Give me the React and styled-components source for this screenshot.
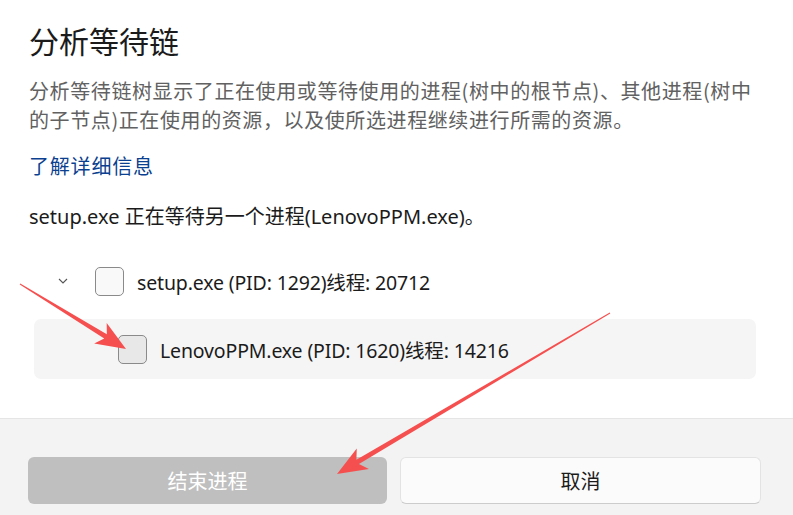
import React from "react";
import styled, { createGlobalStyle } from "styled-components";

const Global = createGlobalStyle`
  html, body { margin: 0; padding: 0; background: #fff; }
  body { width: 793px; height: 515px; overflow: hidden; font-family: "Noto Sans", "Noto Sans CJK SC", sans-serif; }
`;

const Dialog = styled.div`
  position: relative;
  width: 793px;
  height: 515px;
  display: flex;
  flex-direction: column;
  background: #fff;
`;

const Body = styled.div`
  flex: 1;
  padding: 17px 29px 0 29px;
  display: flex;
  flex-direction: column;
`;

const Title = styled.h1`
  margin: 0;
  font-family: "Noto Sans CJK SC", sans-serif;
  font-weight: 400;
  font-size: 30px;
  line-height: 46px;
  color: #1b1b1b;
`;

const Desc = styled.p`
  margin: 13px 0 0 0;
  font-family: "Noto Sans CJK SC", sans-serif;
  font-size: 20px;
  line-height: 29px;
  color: #616161;
  letter-spacing: 0.6px;
`;

const Link = styled.a`
  margin-top: 17px;
  font-family: "Noto Sans CJK SC", sans-serif;
  font-size: 20px;
  line-height: 30px;
  letter-spacing: 0.8px;
  color: #0b3f8f;
  text-decoration: none;
`;

const Status = styled.p`
  margin: 21px 0 0 0;
  font-size: 20px;
  line-height: 30px;
  color: #1b1b1b;
`;

const Tree = styled.div`
  margin-top: 27px;
  display: flex;
  flex-direction: column;
  gap: 16px;
`;

const Row = styled.div`
  display: flex;
  align-items: center;
  height: ${(p) => (p.$child ? 60 : 44)}px;
  margin-left: ${(p) => (p.$child ? 5 : 0)}px;
  width: ${(p) => (p.$child ? "722px" : "auto")};
  padding-left: ${(p) => (p.$child ? 84 : 28)}px;
  background: ${(p) => (p.$child ? "#f5f5f5" : "transparent")};
  border-radius: 7px;
  box-sizing: border-box;
`;

const Chevron = styled.svg`
  width: 12px;
  height: 12px;
  margin-right: 26px;
`;

const Check = styled.span`
  width: 27px;
  height: 27px;
  border: 1px solid #8a8a8a;
  border-radius: 5px;
  background: ${(p) => (p.$hover ? "#e8e8e8" : "#f9f9f9")};
  flex-shrink: 0;
`;

const Label = styled.span`
  margin-left: 13px;
  font-size: 19.5px;
  letter-spacing: -0.15px;
  color: #1b1b1b;
`;

const Footer = styled.div`
  height: 97px;
  border-top: 1px solid #e5e5e5;
  background: #f3f3f3;
  display: flex;
  gap: 13px;
  padding: 38px 32px 0 28px;
  box-sizing: border-box;
`;

const Button = styled.button`
  flex: 1 1 0;
  min-width: 0;
  margin: 0;
  height: 47px;
  border-radius: 6px;
  font-family: "Noto Sans CJK SC", sans-serif;
  font-size: 20px;
  cursor: default;
  background: ${(p) => (p.$primary ? "#bfbfbf" : "#fbfbfb")};
  color: ${(p) => (p.$primary ? "#ffffff" : "#1b1b1b")};
  border: ${(p) => (p.$primary ? "none" : "1px solid #e3e3e3")};
  border-bottom-color: ${(p) => (p.$primary ? "transparent" : "#cccccc")};
`;

const Overlay = styled.svg`
  position: absolute;
  left: 0;
  top: 0;
  pointer-events: none;
`;

function Arrow({ x1, y1, x2, y2, w1 = 1, w2 = 5, head = 30, hw = 12 }) {
  const dx = x2 - x1, dy = y2 - y1;
  const len = Math.hypot(dx, dy);
  const ux = dx / len, uy = dy / len;
  const px = -uy, py = ux;
  const bx = x2 - ux * head, by = y2 - uy * head;
  const nx = x2 - ux * (head * 0.8), ny = y2 - uy * (head * 0.8);
  const pts = [
    [x1 + px * w1 / 2, y1 + py * w1 / 2],
    [nx + px * w2 / 2, ny + py * w2 / 2],
    [bx + px * hw, by + py * hw],
    [x2, y2],
    [bx - px * hw, by - py * hw],
    [nx - px * w2 / 2, ny - py * w2 / 2],
    [x1 - px * w1 / 2, y1 - py * w1 / 2],
  ];
  return <polygon points={pts.map((p) => p.join(",")).join(" ")} fill="#f5504f" />;
}

export default function App() {
  return (
    <>
      <Global />
      <Dialog>
        <Body>
          <Title>分析等待链</Title>
          <Desc>
            分析等待链树显示了正在使用或等待使用的进程(树中的根节点)、其他进程(树中的子节点)正在使用的资源，以及使所选进程继续进行所需的资源。
          </Desc>
          <Link href="#">了解详细信息</Link>
          <Status>setup.exe 正在等待另一个进程(LenovoPPM.exe)。</Status>
          <Tree>
            <Row>
              <Chevron viewBox="0 0 12 12">
                <path d="M2 4 L6 8 L10 4" fill="none" stroke="#555" strokeWidth="1.1" />
              </Chevron>
              <Check />
              <Label>setup.exe (PID: 1292)线程: 20712</Label>
            </Row>
            <Row $child>
              <Check $hover />
              <Label>LenovoPPM.exe (PID: 1620)线程: 14216</Label>
            </Row>
          </Tree>
        </Body>
        <Footer>
          <Button $primary>结束进程</Button>
          <Button>取消</Button>
        </Footer>
        <Overlay width="793" height="515" viewBox="0 0 793 515">
          <Arrow x1={20} y1={284} x2={126} y2={349} />
          <Arrow x1={610} y1={313} x2={337} y2={474} />
        </Overlay>
      </Dialog>
    </>
  );
}
